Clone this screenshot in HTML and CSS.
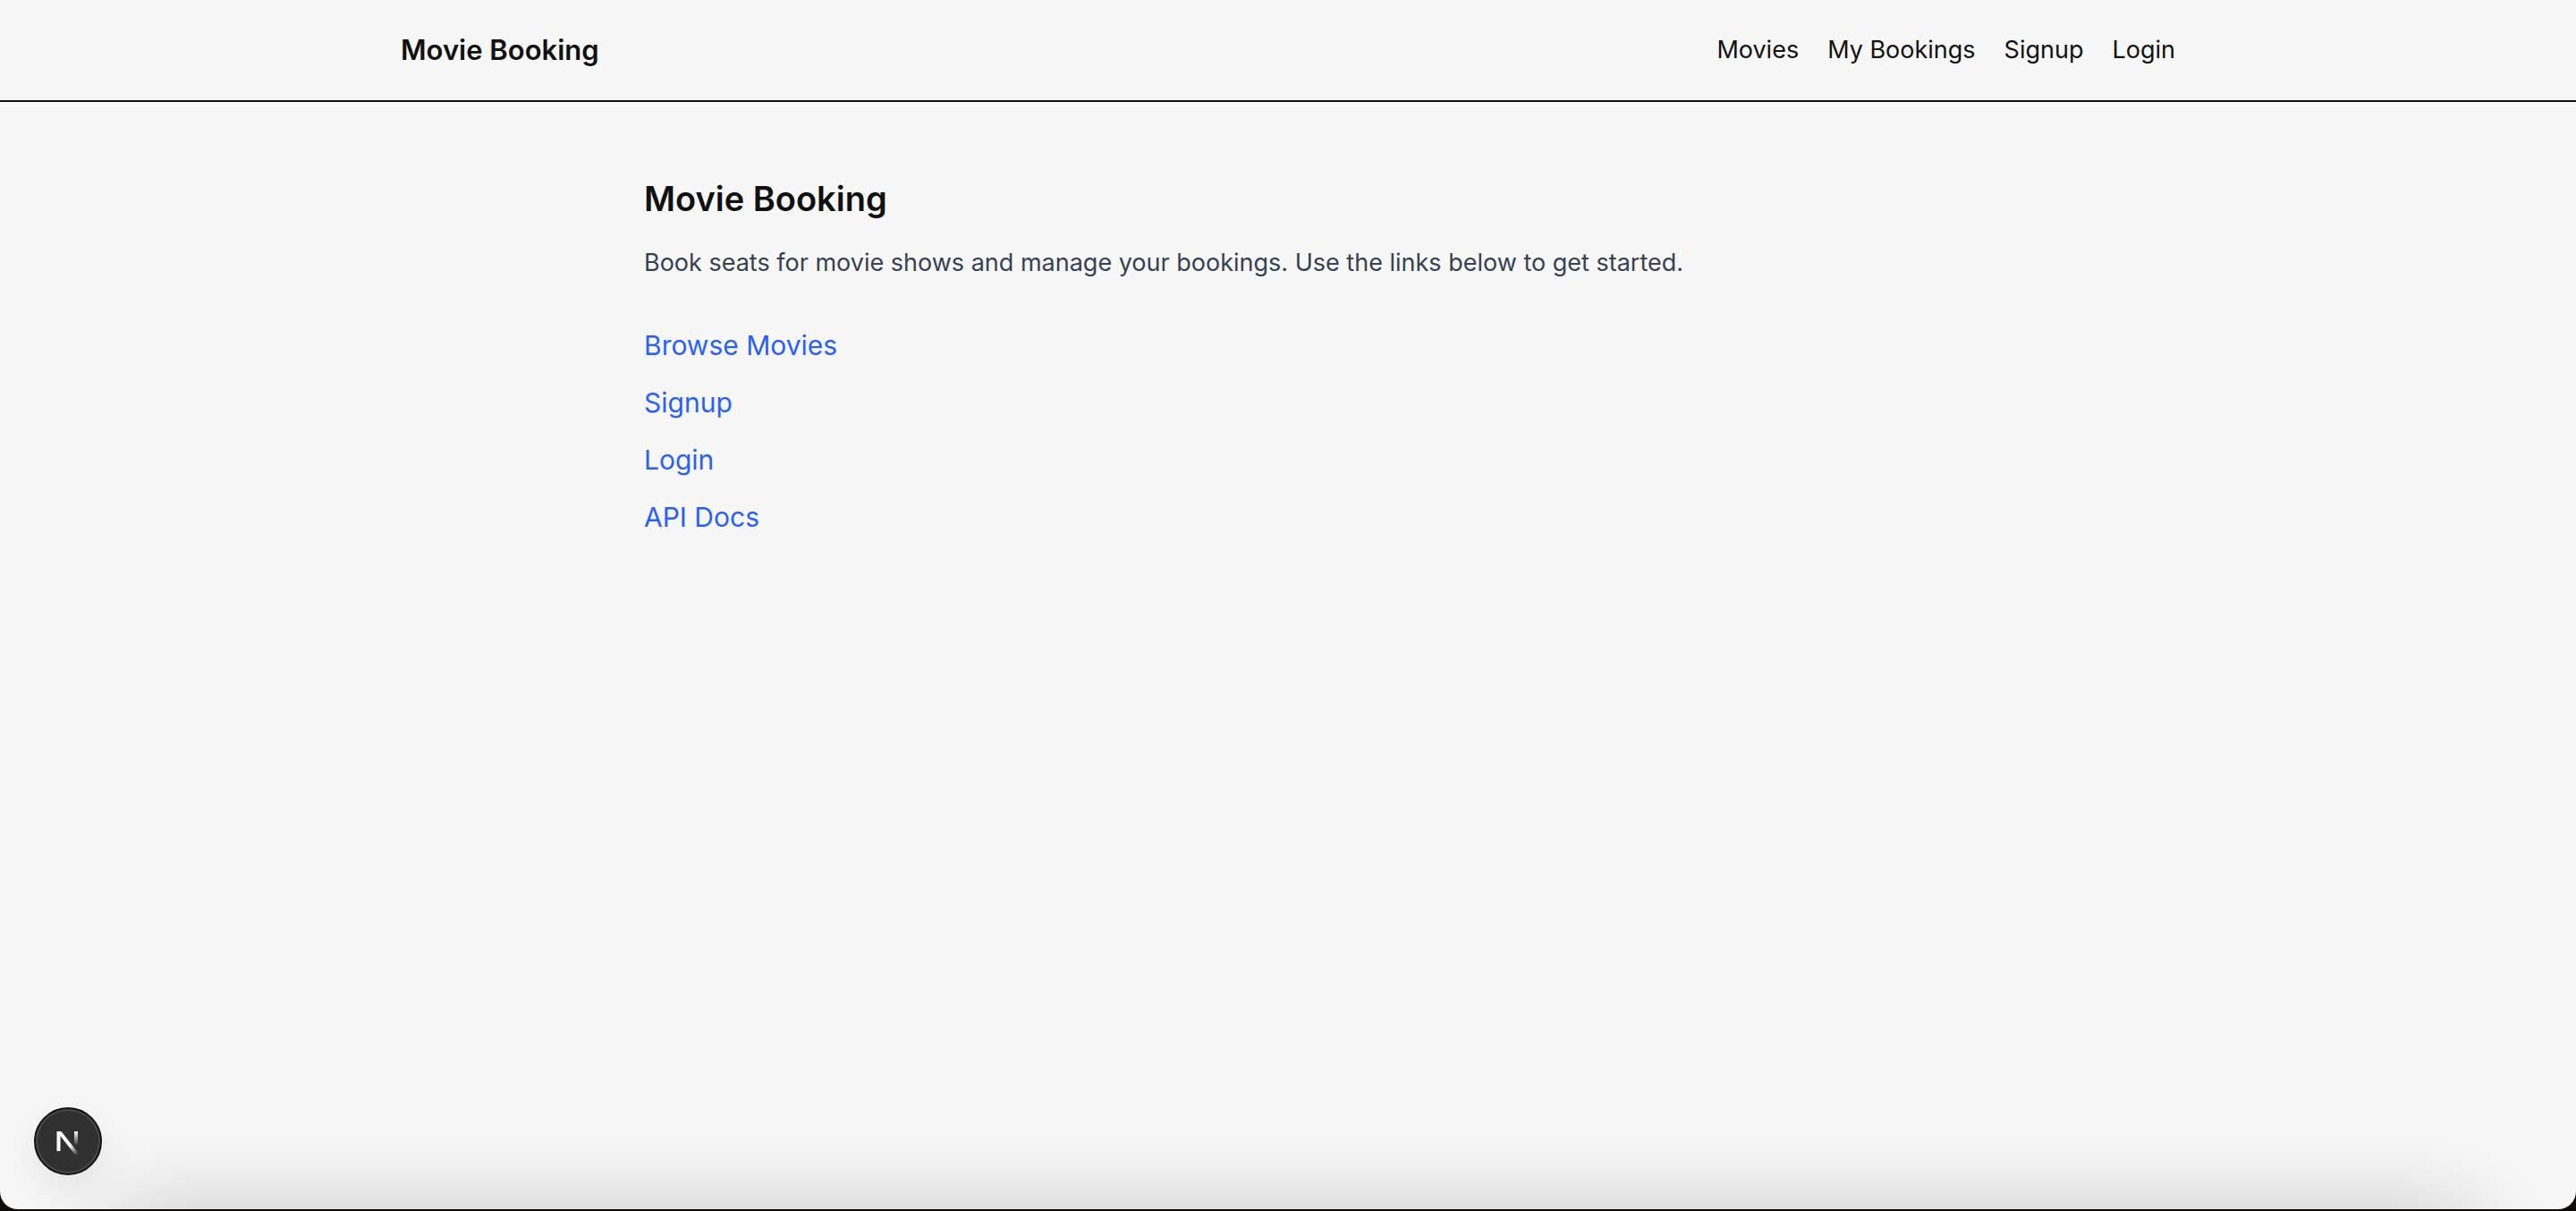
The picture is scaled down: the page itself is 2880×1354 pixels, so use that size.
FILE: index.html
```html
<!DOCTYPE html>
<html lang="en">
<head>
<meta charset="utf-8">
<meta name="viewport" content="width=device-width, initial-scale=1">
<title>Movie Booking</title>
<link rel="stylesheet" href="styles.css">
</head>
<body>
<div class="window">
  <header class="site-header">
    <div class="header-inner">
      <a class="brand" href="#">Movie Booking</a>
      <nav class="nav" aria-label="Main">
        <a href="#movies">Movies</a>
        <a href="#bookings">My Bookings</a>
        <a href="#signup">Signup</a>
        <a href="#login">Login</a>
      </nav>
    </div>
  </header>
  <main class="main">
    <h1 class="title">Movie Booking</h1>
    <p class="intro">Book seats for movie shows and manage your bookings. Use the links below to get started.</p>
    <ul class="links">
      <li><a href="#movies">Browse Movies</a></li>
      <li><a href="#signup">Signup</a></li>
      <li><a href="#login">Login</a></li>
      <li><a href="#docs">API Docs</a></li>
    </ul>
  </main>
  <div class="dock-shadow"></div>
  <button class="dev-button" type="button" aria-label="Open developer tools">
    <svg width="40" height="40" viewBox="0 0 40 40" fill="none" aria-hidden="true">
      <defs>
        <linearGradient id="diagonal" gradientUnits="userSpaceOnUse" x1="23" y1="24" x2="31" y2="35">
          <stop stop-color="#fff"/>
          <stop offset="1" stop-color="#fff" stop-opacity="0"/>
        </linearGradient>
        <linearGradient id="stem" gradientUnits="userSpaceOnUse" x1="29" y1="9" x2="29" y2="25">
          <stop stop-color="#fff"/>
          <stop offset="1" stop-color="#fff" stop-opacity="0"/>
        </linearGradient>
      </defs>
      <path d="M9.500 31V9" stroke="#fff" stroke-width="4"/>
      <path d="M7.500 9H12.500L32.500 34.500L29 36.500L7.500 9Z" fill="url(#diagonal)"/>
      <path d="M29 9V25" stroke="url(#stem)" stroke-width="4"/>
    </svg>
  </button>
</div>
</body>
</html>
```
FILE: styles.css
```css
* {
  box-sizing: border-box;
}

body {
  margin: 0;
  background: #0d0a05;
  color: #111;
  font-family: Inter, "Liberation Sans", sans-serif;
}

a {
  color: inherit;
  text-decoration: none;
}

.window {
  position: relative;
  height: calc(100vh - 2px);
  overflow: hidden;
  background: #f7f7f7;
  border-radius: 0 0 20px 20px;
}

.site-header {
  border-bottom: 2px solid #111;
}

.header-inner {
  display: flex;
  align-items: center;
  justify-content: space-between;
  max-width: 2048px;
  margin: 0 auto;
  padding: 32px;
}

.brand {
  font-size: 31px;
  font-weight: 600;
  line-height: 48px;
}

.nav {
  display: flex;
  gap: 32px;
  font-size: 27px;
  line-height: 40px;
}

.main {
  max-width: 1536px;
  margin: 0 auto;
  padding: 80px 48px;
}

.title {
  margin: 0;
  font-size: 38px;
  font-weight: 600;
  line-height: 56px;
}

.intro {
  margin: 20px 0 0;
  color: #364153;
  font-size: 27px;
  line-height: 48px;
}

.links {
  display: grid;
  gap: 16px;
  margin: 44px 0 0;
  padding: 0;
  color: #2b5ffb;
  font-size: 30px;
  line-height: 48px;
  list-style: none;
}

.dock-shadow {
  position: absolute;
  top: 100%;
  left: 120px;
  right: 110px;
  height: 160px;
  box-shadow: 0 0 100px rgba(0, 0, 0, 0.18);
}

.dev-button {
  position: absolute;
  left: 38px;
  bottom: 38px;
  display: grid;
  place-items: center;
  width: 76px;
  height: 76px;
  padding: 0;
  background: #303030;
  border: 2px solid #141414;
  border-radius: 50%;
  box-shadow: inset 0 0 0 2px #494949, 0 16px 48px rgba(0, 0, 0, 0.08);
}
```
